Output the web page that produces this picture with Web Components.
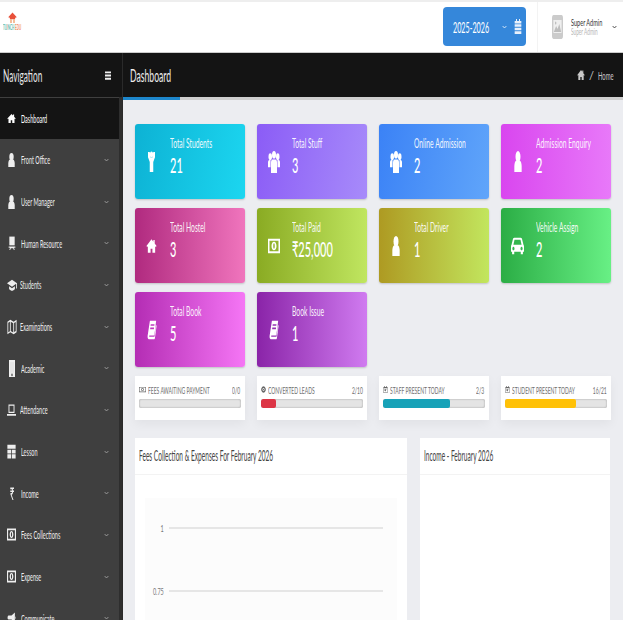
<!DOCTYPE html>
<html><head><meta charset="utf-8">
<style>
html,body{margin:0;padding:0;height:620px;overflow:hidden;background:#ecedf1;font-family:Lato,"Noto Sans",sans-serif}
</style></head>
<body>
<x-app></x-app>
<script>
const P={
home:'<path d="M12 2 1 12l1.500 1.500L4 12.200V22h6v-6h4v6h6v-9.800l1.500 1.300L23 12l-4-3.600V3h-3v2.700z"/>',
user:'<ellipse cx="12" cy="6.500" rx="7.500" ry="6.500"/><path d="M1 24v-6c0-4 2.500-7 6-7h10c3.500 0 6 3 6 7v6z"/>',
users:'<circle cx="12" cy="5" r="4"/><circle cx="4.500" cy="7" r="3.500"/><circle cx="19.500" cy="7" r="3.500"/><path d="M6 24V13c0-2 2-3 3-3h6c1 0 3 1 3 3v11z"/><path d="M0 18v-5c0-1.500 1-2.500 3-2.500h2V18zM24 18v-5c0-1.500-1-2.500-3-2.500h-2V18z"/>',
male:'<ellipse cx="12" cy="4" rx="5.500" ry="3.500"/><path d="M0 1h6l3 6.500h6L18 1h6v6l-6 5.500V24H6V12.500L0 7z"/>',
hr:'<path d="M4 1h16v15H4z"/><path d="M2 18h20v2H18l2 4h-2.500l-2-3h-7l-2 3H4l2-4H2z"/>',
cap:'<path d="M12 3 0 9l12 6 10-5v8h2V9z"/><path d="M5 14v5c2 2 5 3 7 3s5-1 7-3v-5l-7 3.500z"/>',
map:'<path fill-rule="evenodd" d="M8 1 1 4v19l7-3 8 3 7-3V1l-7 3zM3 5.500 7 4v14.500l-4 1.500zM9 4l6 2.200v14L9 18zM17 6l4-1.500V18l-4 1.600z"/>',
mobile:'<path d="M3 0h18v24H3z"/><path d="M6 3h12v15H6z" fill="#e4e4e4"/><circle cx="12" cy="21" r="1.800" fill="#333"/>',
laptop:'<path fill-rule="evenodd" d="M4 1h16v17H4zM6.500 3.500v12h11v-12z"/><path d="M0 20h24v3.500H0z"/>',
table:'<path d="M1 1h22v6.500H1zM1 9h10v6H1zM13 9h10v6H13zM1 16.500h10V23H1zM13 16.500h10V23H13z"/>',
rupee:'<path d="M5 1h15v2.500h-5c.8.800 1.300 1.800 1.500 3H20V9h-3.500c-.5 3-2.800 5-6 5.400L18 24h-4L6 14v-3h3c2 0 3.400-.7 3.900-2H5V6.500h7.900C12.400 5 11 4 9 4H5z"/>',
money:'<path fill-rule="evenodd" d="M0 1h24v22H0zM3 4v16h18V4zM12 5.500c3 0 5 3 5 6.500s-2 6.500-5 6.500-5-3-5-6.500 2-6.500 5-6.500zM12 8c-.8 0-1.500 1-1.500 4s.7 4 1.500 4 1.500-1 1.500-4-.7-4-1.500-4z"/>',
horn:'<path d="M21 1v20l-9-6H4c-1.500 0-2.500-1.500-2.500-3.500S2.500 7 4 7h8zM5 16h4l2 7H7zM22.500 8.500c1 .8 1.500 1.800 1.500 3s-.5 2.200-1.500 3z"/>',
book:'<path fill-rule="evenodd" d="M7 1h15l-4 16c-.3 1-1 1.500-2 1.500H6c-1 0-1.300 1.500 0 1.500h12l3.500-14 1.500 1-4 15c-.2.600-.7 1-1.300 1H4c-2 0-3-2-2.500-4zM9 5l-.5 2h9l.5-2zM8 9l-.5 2h9l.5-2z"/>',
car:'<path fill-rule="evenodd" d="M6 3h12c1.500 0 2.200 1 2.600 2L23 11c.7.500 1 1.200 1 2v6h-2v3h-4v-3H6v3H2v-3H0v-6c0-.8.300-1.500 1-2l2.400-6C3.800 4 4.500 3 6 3zM6.500 5.500 4.500 11h15l-2-5.500zM4.500 13.500a2 2 0 1 0 .01 0zM19.500 13.500a2 2 0 1 0 .01 0z"/>',
cal:'<path fill-rule="evenodd" d="M6 0h3v3h6V0h3v3h4v21H2V3h4zM4 8v14h16V8zM7 11h10l-5.500 8L7 15.500z"/>',
calfill:'<path d="M6 0h3v3h6V0h3v3h4v4H2V3h4zM2 8.500h20v4H2zM2 14h20v4H2zM2 19.500h20V24H2z"/>',
moneyo:'<path fill-rule="evenodd" d="M0 3h24v18H0zM2 5v14h20V5zM12 7a5 5 0 1 1-.01 0zM12 9.500a2.500 2.500 0 1 0 .01 0z"/>',
at:'<path fill-rule="evenodd" d="M12 1a11 11 0 1 1-.01 0zM12 7a5 5 0 1 0 .01 0zM12 9.500a2.500 2.500 0 1 1-.01 0z"/>',
bars:'<path d="M0 1h24v5H0zM0 9.500h24v5H0zM0 18h24v5H0z"/>',
chev:'<path d="M3 6l9 12 9-12" fill="none" stroke="currentColor" stroke-width="4"/>',
photo:'<rect width="24" height="24" rx="3" fill="#cbcbcb"/><path d="M3 5h18v13H3z" fill="#efefef"/><path d="M4 17l5-6 3 3 4-5 4 8z" fill="#bdbdbd"/><circle cx="8" cy="8" r="1.500" fill="#bdbdbd"/>',
house:'<path d="M12 1 1 11l2 2 2-1.800V16h14v-4.800l2 1.800 2-2z" fill="#e8503a"/><path d="M6 16h4v8H6zM14 16h4v8h-4z" fill="#f2a979"/>'
};
function def(name,css,html){
  customElements.define(name,class extends HTMLElement{
    constructor(){super();const r=this.attachShadow({mode:'open'});r.innerHTML='<style>'+css+'</style>'+(typeof html==='function'?html(this):html);}
  });
}
/* condensed text: the reference is horizontally squeezed */
def('x-t',':host{display:inline-block;white-space:nowrap;transform:scaleX(var(--sx,.55));transform-origin:var(--o,left) center}','<slot></slot>');
def('x-i',':host{display:inline-flex;flex:none;width:var(--w,10px);height:var(--h,12px)}svg{width:100%;height:100%;display:block;fill:currentColor}',
  e=>`<svg viewBox="0 0 24 24" preserveAspectRatio="none">${P[e.getAttribute('n')]}</svg>`);

def('x-nav',`:host{display:flex;align-items:center;height:41.67px;flex:none;font-size:11px;color:#eee;position:relative}
:host([active]){background:#141414;color:#fff}
.ic{width:19px;display:flex;justify-content:center;padding-left:2px;flex:none}
.l{flex:1;min-width:0;--sx:.5;display:flex}
.l x-t{width:0;flex:1}
.c{margin-right:10px;color:#b0b0b0;--w:5px;--h:4px}
x-i.m{--w:var(--iw,8px);--h:var(--ih,13px)}`,
e=>`<div class="ic"><x-i class="m" n="${e.getAttribute('i')}"></x-i></div><div class="l" style="margin-left:${e.getAttribute('ml')||0}px"><x-t><slot></slot></x-t></div>${e.hasAttribute('active')?'':'<x-i class="c" n="chev"></x-i>'}`);

def('x-side',`:host{display:flex;flex-direction:column;width:122px;flex:none;background:#3f3f3f;border-right:1px solid #2a2a2a;overflow:hidden}
.h{height:44px;flex:none;background:#141414;display:flex;align-items:center;justify-content:space-between;padding:0 11px 0 3px;color:#e6e6e6;font-size:18px;--sx:.46}
.h x-t{width:0;flex:1}
.h x-i{--w:6px;--h:9px;color:#eee}
.list{flex:1;display:flex;flex-direction:column;padding-top:.5px;border-right:3px solid #2e2e2e}`,
`<div class="h"><x-t>Navigation</x-t><x-i n="bars"></x-i></div><div class="list"><slot></slot></div>`);

def('x-top',`:host{display:flex;height:53px;box-sizing:border-box;background:#fff;border-top:2px solid #eee;border-bottom:1px solid #ccc;flex:none;align-items:stretch}
.logo{padding:10px 0 0 3px;flex:1;display:flex;flex-direction:column;align-items:flex-start}
.year{width:83px;height:39px;margin-top:5px;background:#3587da;border-radius:4px;color:#fff;display:flex;align-items:center;box-sizing:border-box;padding-left:10px;font-size:16px;flex:none}
.year .n{flex:1;width:0;--sx:.45}
.year .c{--w:5px;--h:4px;margin-right:7px}
.year .k{--w:8px;--h:15px;margin-right:4px;color:#e8f0fb}
.user{width:86px;margin-left:11px;border-left:1px solid #f3f3f3;display:flex;align-items:center;box-sizing:border-box;padding-left:14px;flex:none}
.user .p{--w:11px;--h:24px}
.u{flex:1;min-width:0;margin-left:8px;display:flex;flex-direction:column;align-items:flex-start;font-size:10px;line-height:11px;color:#333;--sx:.56}
.u small{font-size:8.500px;color:#b5b5b5;line-height:9px}
.user .c{--w:5px;--h:4px;margin-right:6px;color:#222}
.mark{--w:9px;--h:11px;margin-left:5px}
.brand{font-size:7px;line-height:9px;color:#55b7a8;--sx:.42;font-weight:700}
.brand b{color:#ef8a5a;font-weight:700}`,
`<div class="logo"><x-i class="mark" n="house"></x-i><x-t class="brand">TU<b>I</b>NCH <b>EDU</b></x-t></div>
<div class="year"><x-t class="n">2025-2026</x-t><x-i class="c" n="chev"></x-i><x-i class="k" n="calfill"></x-i></div>
<div class="user"><x-i class="p" n="photo"></x-i><div class="u"><x-t>Super Admin</x-t><small><x-t>Super Admin</x-t></small></div><x-i class="c" n="chev"></x-i></div>`);

def('x-phead',`:host{display:flex;align-items:center;justify-content:space-between;height:44px;flex:none;background:#141414;color:#eee;padding:0 8px 0 7px;font-size:18px}
.t{--sx:.48}
.b{display:flex;align-items:center;gap:2px;font-size:11px;color:#c9c9c9;--sx:.53}
.b x-i{--w:8px;--h:12px;margin-right:2px}
.b .tt{width:17px;display:flex;margin-left:2px}`,
`<x-t class="t">Dashboard</x-t><div class="b"><x-i n="home"></x-i><span>/</span><div class="tt"><x-t>Home</x-t></div></div>`);

def('x-load',`:host{display:flex;height:3px;background:#cfcfcf;flex:none}i{width:57px;background:#1d87cc;display:block}`,'<i></i>');

def('x-stat',`:host{display:flex;height:75px;border-radius:3px;color:#fff;background:linear-gradient(var(--a,90deg),var(--c1),var(--c2));box-shadow:0 1px 2px rgba(0,0,0,.18);align-items:flex-start;overflow:hidden}
.ic{width:33px;padding-right:2px;flex:none;height:75px;display:flex;align-items:center;justify-content:center}
.ic x-i{--w:var(--iw,10px);--h:var(--ih,21px)}
.tx{display:flex;flex-direction:column;align-items:flex-start;padding-top:11px;min-width:0;flex:1}
.l{font-size:13px;line-height:16px;--sx:.52;opacity:.92}
.v{font-size:22px;line-height:30px;font-weight:500;--sx:.5;margin-top:-1px}`,
e=>`<div class="ic"><x-i n="${e.getAttribute('i')}"></x-i></div><div class="tx"><x-t class="l">${e.getAttribute('l')}</x-t><x-t class="v">${e.getAttribute('v')}</x-t></div>`);

def('x-prog',`:host{display:block;height:44px;background:#fff;box-sizing:border-box;padding:8px 4px 0;box-shadow:0 4px 10px rgba(0,0,0,.05)}
.r{display:flex;align-items:center;justify-content:space-between;height:11px;font-size:10px;color:#6e6e6e;--sx:.5}
.a{display:flex;align-items:center;gap:2px;min-width:0;flex:1}
.a x-t{width:0;flex:1}
.a x-i{--w:var(--iw,5px);--h:7px;color:#666}
.vw{display:flex;justify-content:flex-end;width:14px}
.v{--o:right;flex:none}
.bar{height:9px;margin-top:4px;background:#e4e4e4;border-radius:2px;box-shadow:inset 0 0 2px rgba(0,0,0,.35);overflow:hidden}
.bar i{display:block;height:100%;border-radius:2px}`,
e=>`<div class="r"><div class="a"><x-i n="${e.getAttribute('i')}" style="${e.getAttribute('is')||''}"></x-i><x-t>${e.getAttribute('l')}</x-t></div><div class="vw"><x-t class="v">${e.getAttribute('v')}</x-t></div></div><div class="bar"><i style="width:${e.getAttribute('p')}%;background:${e.getAttribute('c')}"></i></div>`);

def('x-box',`:host{display:flex;flex-direction:column;background:#fff;min-width:0}
.h{height:37px;flex:none;box-sizing:border-box;border-bottom:1px solid #f3f3f3;display:flex;align-items:center;padding:0 0 3px 4px;font-size:16px;color:#444;--sx:.41}
.h x-t{width:0;flex:1}
.b{flex:1;min-height:0}`,
e=>`<div class="h"><x-t>${e.getAttribute('t')}</x-t></div><div class="b"><slot></slot></div>`);

def('x-chart',`:host{display:block;margin:23px 10px 0;height:200px;background:#fcfcfc;padding-top:29px;box-sizing:border-box}
.r{display:flex;align-items:flex-start;height:63px;font-size:10px;color:#777;--sx:.55}
.n{width:19px;display:flex;justify-content:flex-end;line-height:1;margin-top:-4px;flex:none}
.n x-t{--o:right}
.l{flex:none;width:214px;height:2px;background:#e6e6e6;margin-left:5px}`,
`<div class="r"><div class="n"><x-t>1</x-t></div><div class="l"></div></div><div class="r"><div class="n"><x-t>0.75</x-t></div><div class="l"></div></div>`);

def('x-app',`:host{display:flex;flex-direction:column;width:623px;height:620px;overflow:hidden}
.m{display:flex;flex:1;min-height:0}
.main{flex:1;min-width:0;display:flex;flex-direction:column}
.c{flex:1;min-height:0;padding:24px 13px 0 12px;display:flex;flex-direction:column;overflow:hidden}
.g{display:grid;grid-template-columns:repeat(4,109.500px);column-gap:12.500px;row-gap:9px;flex:none}
.p{margin-top:9px}
.w{display:grid;grid-template-columns:272px 190px;column-gap:13px;margin-top:18px;flex:1;min-height:0}`,
`<x-top></x-top>
<div class="m">
<x-side>
 <x-nav i="home" active style="--iw:9px;--ih:11px">Dashboard</x-nav>
 <x-nav i="user" style="--iw:7px;--ih:14px">Front Office</x-nav>
 <x-nav i="user" style="--iw:7px;--ih:14px">User Manager</x-nav>
 <x-nav i="hr" style="--iw:8px;--ih:14px">Human Resource</x-nav>
 <x-nav i="cap" ml="-1.500" style="--iw:10px;--ih:14px">Students</x-nav>
 <x-nav i="map" ml="-1.500" style="--iw:10px;--ih:16px">Examinations</x-nav>
 <x-nav i="mobile" style="--iw:8px;--ih:17px">Academic</x-nav>
 <x-nav i="laptop" ml="-1.500" style="--iw:9px;--ih:12px">Attendance</x-nav>
 <x-nav i="table" style="--iw:9px;--ih:15px">Lesson</x-nav>
 <x-nav i="rupee" style="--iw:6px;--ih:13px">Income</x-nav>
 <x-nav i="money" style="--iw:9px;--ih:13px">Fees Collections</x-nav>
 <x-nav i="money" style="--iw:9px;--ih:13px">Expense</x-nav>
 <x-nav i="horn" style="--iw:9px;--ih:12px">Communicate</x-nav>
</x-side>
<div class="main">
 <x-phead></x-phead><x-load></x-load>
 <div class="c">
  <div class="g">
   <x-stat l="Total Students" v="21" i="male" style="--c1:#0db2d4;--c2:#1cd6f0;--a:100deg;--iw:7px;--ih:21px"></x-stat>
   <x-stat l="Total Stuff" v="3" i="users" style="--c1:#8b5cf6;--c2:#a78bfa;--a:100deg;--iw:12px;--ih:23px"></x-stat>
   <x-stat l="Online Admission" v="2" i="users" style="--c1:#3b82f6;--c2:#60a5fa;--a:100deg;--iw:12px;--ih:23px"></x-stat>
   <x-stat l="Admission Enquiry" v="2" i="user" style="--c1:#d946ef;--c2:#e879f9;--iw:8px;--ih:21px"></x-stat>
   <x-stat l="Total Hostel" v="3" i="home" style="--c1:#b02a7f;--c2:#f075bd;--iw:11px;--ih:16px"></x-stat>
   <x-stat l="Total Paid" v="₹25,000" i="money" style="--c1:#8aab23;--c2:#c0e660;--iw:12px;--ih:16px"></x-stat>
   <x-stat l="Total Driver" v="1" i="user" style="--c1:#ae9a22;--c2:#c2e65e;--iw:8px;--ih:20px"></x-stat>
   <x-stat l="Vehicle Assign" v="2" i="car" style="--c1:#2bad45;--c2:#68f085;--iw:13px;--ih:21px"></x-stat>
   <x-stat l="Total Book" v="5" i="book" style="--c1:#b42db4;--c2:#f576f5;--iw:10px;--ih:20px"></x-stat>
   <x-stat l="Book Issue" v="1" i="book" style="--c1:#8a24a8;--c2:#d07bf0;--iw:10px;--ih:20px"></x-stat>
  </div>
  <div class="g p">
   <x-prog l="FEES AWAITING PAYMENT" v="0/0" i="moneyo" p="0" c="#3587da" is="--w:7px"></x-prog>
   <x-prog l="CONVERTED LEADS" v="2/10" i="at" p="15" c="#dc3545"></x-prog>
   <x-prog l="STAFF PRESENT TODAY" v="2/3" i="cal" p="66" c="#17a2b8"></x-prog>
   <x-prog l="STUDENT PRESENT TODAY" v="16/21" i="cal" p="70" c="#ffc107"></x-prog>
  </div>
  <div class="w">
   <x-box t="Fees Collection &amp; Expenses For February 2026"><x-chart></x-chart></x-box>
   <x-box t="Income - February 2026"></x-box>
  </div>
 </div>
</div>
</div>`);
</script>
</body></html>
